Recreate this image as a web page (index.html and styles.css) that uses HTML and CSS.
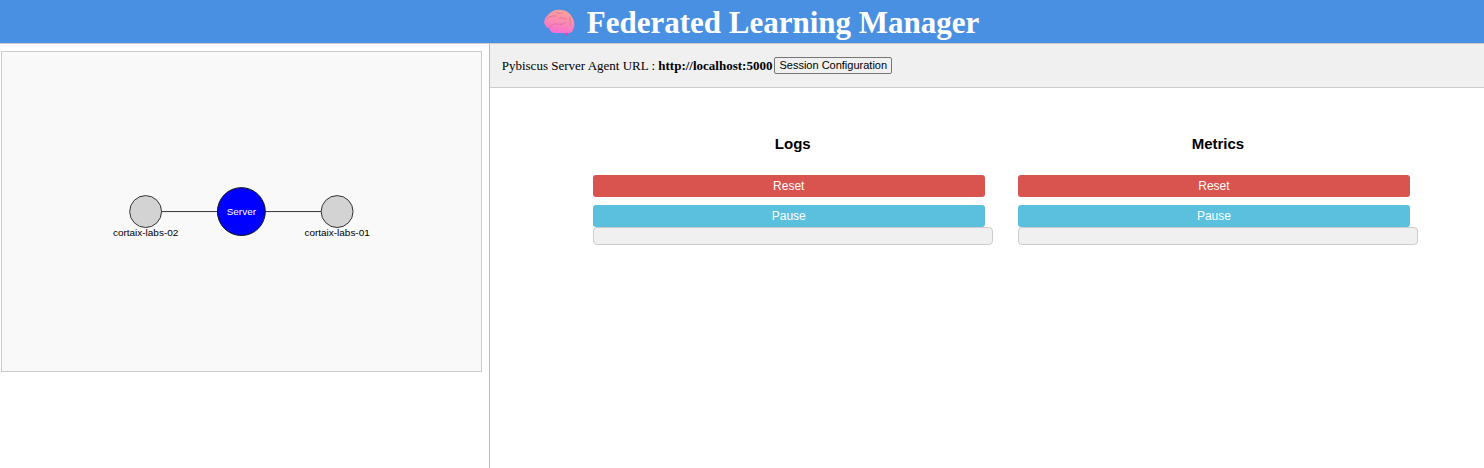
FILE: index.html
```html
<!DOCTYPE html>
<html lang="en">
<head>
<meta charset="utf-8">
<title>Federated Learning Manager</title>
<link rel="stylesheet" href="styles.css">
</head>
<body>
<header class="banner">
  <svg class="brain" viewBox="0 0 32 28" aria-hidden="true">
    <defs>
      <linearGradient id="pink" x1="0.7" y1="0" x2="0.4" y2="1">
        <stop offset="0" stop-color="#fba398"/>
        <stop offset="0.5" stop-color="#fb8cb2"/>
        <stop offset="1" stop-color="#fb6bd6"/>
      </linearGradient>
    </defs>
    <path d="M20 23l4 4 1-5z" fill="#f032b4"/>
    <path d="M3 17C0 15 1 9 5 6 8 2 13 0 18 1c5 0 9 3 11 7 3 4 3 9 1 13-1 3-5 4-9 3H12c-3 0-5-2-6-5-2 0-3-1-3-2z" fill="url(#pink)"/>
    <path d="M4 10c2-3 5-3 9-3M13 3c2 1 3 2 6 1M6 18c3-1 4-4 8-3s7 0 9-2M16 9c3-1 5 1 7 1M27 8c-1 3 1 5 0 8" fill="none" stroke="#d8608c" stroke-width="1" stroke-linecap="round" opacity="0.6"/>
  </svg>
  <h1 class="title">Federated Learning Manager</h1>
</header>
<div class="layout">
  <aside class="sidebar">
    <svg class="graph" viewBox="0 0 480 320" role="img" aria-label="Server connected to two clients">
      <g class="links">
        <line x1="240" y1="160" x2="144" y2="160"/>
        <line x1="240" y1="160" x2="336" y2="160"/>
      </g>
      <circle class="client" cx="144" cy="160" r="16"/>
      <circle class="client" cx="336" cy="160" r="16"/>
      <circle class="server" cx="240" cy="160" r="24"/>
      <text class="server-label" x="240" y="163">Server</text>
      <text class="label" x="144" y="184">cortaix-labs-02</text>
      <text class="label" x="336" y="184">cortaix-labs-01</text>
    </svg>
  </aside>
  <main class="content">
    <div class="toolbar">
      <span>Pybiscus Server Agent URL : <strong>http://localhost:5000</strong></span>
      <button class="config" type="button">Session Configuration</button>
    </div>
    <div class="panels">
      <section class="panel">
        <h2 class="heading">Logs</h2>
        <button class="action reset" type="button">Reset</button>
        <button class="action pause" type="button">Pause</button>
        <div class="output"></div>
      </section>
      <section class="panel">
        <h2 class="heading">Metrics</h2>
        <button class="action reset" type="button">Reset</button>
        <button class="action pause" type="button">Pause</button>
        <div class="output"></div>
      </section>
    </div>
  </main>
</div>
</body>
</html>
```
FILE: styles.css
```css
* {
  box-sizing: border-box;
}

body {
  margin: 0;
  min-height: 100vh;
  display: flex;
  flex-direction: column;
  background: #fff;
  color: #000;
  font-family: "Liberation Serif", "Times New Roman", serif;
}

.banner {
  display: flex;
  justify-content: center;
  align-items: center;
  gap: 12px;
  padding: 4px 0 2px 38px;
  background: #4a90e2;
  border-bottom: 1px solid #ccc;
  color: #fff;
}

.brain {
  width: 32px;
  height: 28px;
}

.title {
  margin: 0;
  font-size: 31px;
  line-height: 37px;
}

.layout {
  flex: 1;
  display: flex;
}

.sidebar {
  width: 33%;
  padding: 7px 7px 7px 1px;
  border-right: 1px solid #bbb;
}

.graph {
  display: block;
  width: 100%;
  background: #f9f9f9;
  border: 1px solid #ccc;
  font-family: "Liberation Sans", Arial, sans-serif;
  font-size: 10px;
  text-anchor: middle;
}

.links {
  stroke: #333;
}

.client {
  fill: #d3d3d3;
  stroke: #333;
}

.server {
  fill: #00f;
  stroke: #111;
}

.server-label {
  fill: #fff;
}

.content {
  flex: 1;
}

.toolbar {
  display: flex;
  align-items: center;
  gap: 2px;
  padding: 13px 12px;
  background: #f0f0f0;
  border-bottom: 1px solid #ccc;
  font-size: 13px;
  line-height: 17px;
}

.config {
  padding: 0 4px;
  background: #f0f0f0;
  border: 1px solid #767676;
  border-radius: 2px;
  color: #000;
  font-family: "Liberation Sans", Arial, sans-serif;
  font-size: 11px;
  line-height: 15px;
}

.panels {
  display: flex;
  gap: 25px;
  padding: 46px 66px 20px 103px;
  font-family: "Liberation Sans", Arial, sans-serif;
}

.panel {
  flex: 1;
  display: flex;
  flex-direction: column;
}

.heading {
  margin: 0 0 21px;
  font-size: 15px;
  line-height: 20px;
  text-align: center;
}

.action {
  margin: 0 8px 8px 0;
  padding: 0;
  border: 0;
  border-radius: 3px;
  color: #fff;
  font-family: inherit;
  font-size: 12px;
  line-height: 22px;
}

.reset {
  background: #d9534f;
}

.pause {
  margin-bottom: 0;
  background: #5bc0de;
}

.output {
  height: 18px;
  background: #f0f0f0;
  border: 1px solid #ccc;
  border-radius: 4px;
}
```
